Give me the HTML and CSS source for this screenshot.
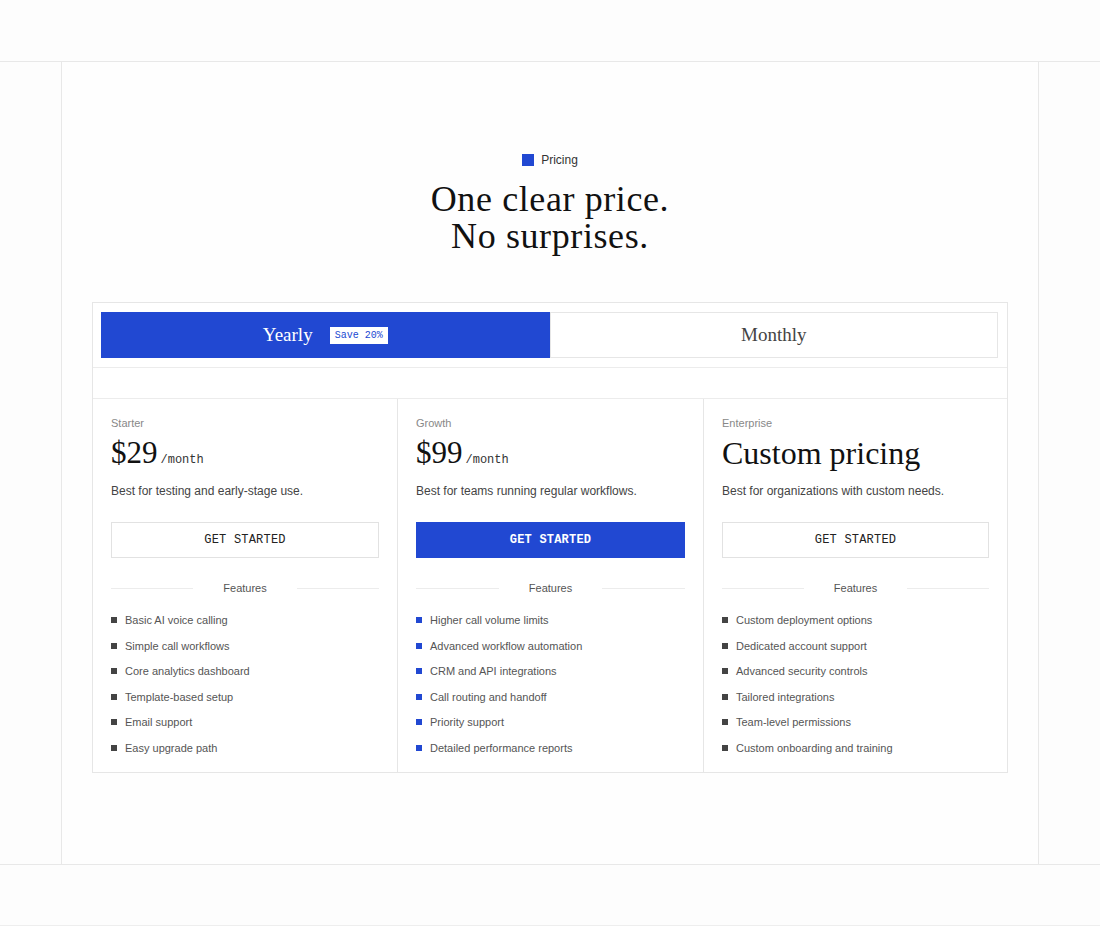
FILE: index.html
```html
<!DOCTYPE html>
<html lang="en">
<head>
<meta charset="UTF-8">
<meta name="viewport" content="width=device-width, initial-scale=1.0">
<title>Pricing</title>
<link rel="stylesheet" href="styles.css">
</head>
<body>

<div class="top-band"></div>

<!-- Pricing section -->
<section class="frame">
<div class="eyebrow"><span class="eyebrow-dot"></span>Pricing</div>
<h1><span class="line">One clear price.</span><span class="line">No surprises.</span></h1>

<div class="card">
<div class="toggle">
<button type="button" class="toggle-btn active">Yearly <span class="save">Save 20%</span></button>
<button type="button" class="toggle-btn">Monthly</button>
</div>
<div class="spacer"></div>

<div class="plans">
<!-- Starter -->
<div class="plan">
<div class="plan-name">Starter</div>
<div class="price">$29<span class="per">/month</span></div>
<p class="desc">Best for testing and early-stage use.</p>
<button type="button" class="cta">GET STARTED</button>
<div class="divider"><span>Features</span></div>
<ul class="features">
<li>Basic AI voice calling</li>
<li>Simple call workflows</li>
<li>Core analytics dashboard</li>
<li>Template-based setup</li>
<li>Email support</li>
<li>Easy upgrade path</li>
</ul>
</div>

<!-- Growth -->
<div class="plan featured">
<div class="plan-name">Growth</div>
<div class="price">$99<span class="per">/month</span></div>
<p class="desc">Best for teams running regular workflows.</p>
<button type="button" class="cta primary">GET STARTED</button>
<div class="divider"><span>Features</span></div>
<ul class="features">
<li>Higher call volume limits</li>
<li>Advanced workflow automation</li>
<li>CRM and API integrations</li>
<li>Call routing and handoff</li>
<li>Priority support</li>
<li>Detailed performance reports</li>
</ul>
</div>

<!-- Enterprise -->
<div class="plan">
<div class="plan-name">Enterprise</div>
<div class="price custom">Custom pricing</div>
<p class="desc">Best for organizations with custom needs.</p>
<button type="button" class="cta">GET STARTED</button>
<div class="divider"><span>Features</span></div>
<ul class="features">
<li>Custom deployment options</li>
<li>Dedicated account support</li>
<li>Advanced security controls</li>
<li>Tailored integrations</li>
<li>Team-level permissions</li>
<li>Custom onboarding and training</li>
</ul>
</div>
</div>
</div>
</section>

<div class="bottom-band"></div>

</body>
</html>
```

FILE: styles.css
```css
/* General styling */
body {
    margin: 0;
    background: #fdfdfd;
    font-family: "Liberation Sans", Arial, sans-serif;
    color: #1a1a1a;
}

.top-band {
    height: 61px;
    border-bottom: 1px solid #e8e8e8;
}

.frame {
    margin: 0 61px;
    border-left: 1px solid #e8e8e8;
    border-right: 1px solid #e8e8e8;
    padding: 91px 30px 91px;
    display: flex;
    flex-direction: column;
    align-items: center;
    background: #fefefe;
}

.bottom-band {
    height: 60px;
    border-top: 1px solid #e8e8e8;
    border-bottom: 1px solid #eeeeee;
}

/* Heading */
.eyebrow {
    display: flex;
    align-items: center;
    gap: 7px;
    font-size: 12px;
    color: #333;
    height: 14px;
}

.eyebrow-dot {
    width: 12px;
    height: 12px;
    background: #2148d2;
}

h1 {
    font-family: "Liberation Serif", "DejaVu Serif", serif;
    font-weight: normal;
    font-size: 36px;
    letter-spacing: 0.6px;
    text-align: center;
    margin: 14px 0 47px;
    color: #111;
}

h1 .line {
    display: block;
    height: 37px;
    line-height: 37px;
}

/* Card */
.card {
    width: 914px;
    border: 1px solid #e6e6e6;
    background: #fff;
}

.toggle {
    display: flex;
    padding: 9px 9px 9px 8px;
    border-bottom: 1px solid #ececec;
}

.toggle-btn {
    flex: 1 1 0;
    height: 46px;
    border: 1px solid #e6e6e6;
    background: #fff;
    font-family: "Liberation Serif", "DejaVu Serif", serif;
    font-size: 19px;
    color: #444;
    display: flex;
    align-items: center;
    justify-content: center;
    gap: 17px;
    cursor: pointer;
    padding: 0;
}

.toggle-btn.active {
    background: #2148d2;
    border-color: #2148d2;
    color: #fff;
}

.save {
    background: #fff;
    color: #2148d2;
    font-family: "Liberation Mono", monospace;
    font-size: 10px;
    padding: 3px 5px;
}

.spacer {
    height: 30px;
    border-bottom: 1px solid #ececec;
}

.plans {
    display: grid;
    grid-template-columns: 305px 306px 1fr;
}

.plan {
    padding: 18px 18px 5px;
    border-right: 1px solid #e6e6e6;
}

.plan:last-child {
    border-right: none;
}

.plan-name {
    font-size: 11px;
    color: #888;
}

.price {
    display: flex;
    align-items: baseline;
    gap: 3px;
    height: 36px;
    font-family: "Liberation Serif", "DejaVu Serif", serif;
    font-size: 31px;
    line-height: 36px;
    margin-top: 6px;
    color: #111;
}

.price.custom {
    font-size: 32px;
}

.per {
    font-family: "Liberation Mono", monospace;
    font-size: 12px;
    color: #333;
}

.desc {
    font-size: 12px;
    color: #444;
    margin: 13px 0 24px;
}

.cta {
    width: 100%;
    height: 36px;
    border: 1px solid #e2e2e2;
    background: #fff;
    font-family: "Liberation Mono", monospace;
    font-size: 12px;
    letter-spacing: 0.2px;
    color: #222;
    cursor: pointer;
}

.cta.primary {
    background: #2148d2;
    border-color: #2148d2;
    color: #fff;
    font-weight: bold;
}

.divider {
    display: flex;
    align-items: center;
    gap: 30px;
    margin: 24px 0 19px;
    font-size: 11px;
    color: #555;
}

.divider::before,
.divider::after {
    content: "";
    flex: 1;
    height: 1px;
    background: #ececec;
}

.features {
    list-style: none;
    margin: 0;
    padding: 0;
}

.features li {
    display: flex;
    align-items: center;
    gap: 8px;
    font-size: 11px;
    color: #555;
    line-height: 14px;
    margin-bottom: 11.6px;
}

.features li::before {
    content: "";
    width: 6px;
    height: 6px;
    background: #444;
}

.featured .features li::before {
    background: #2148d2;
}
```
